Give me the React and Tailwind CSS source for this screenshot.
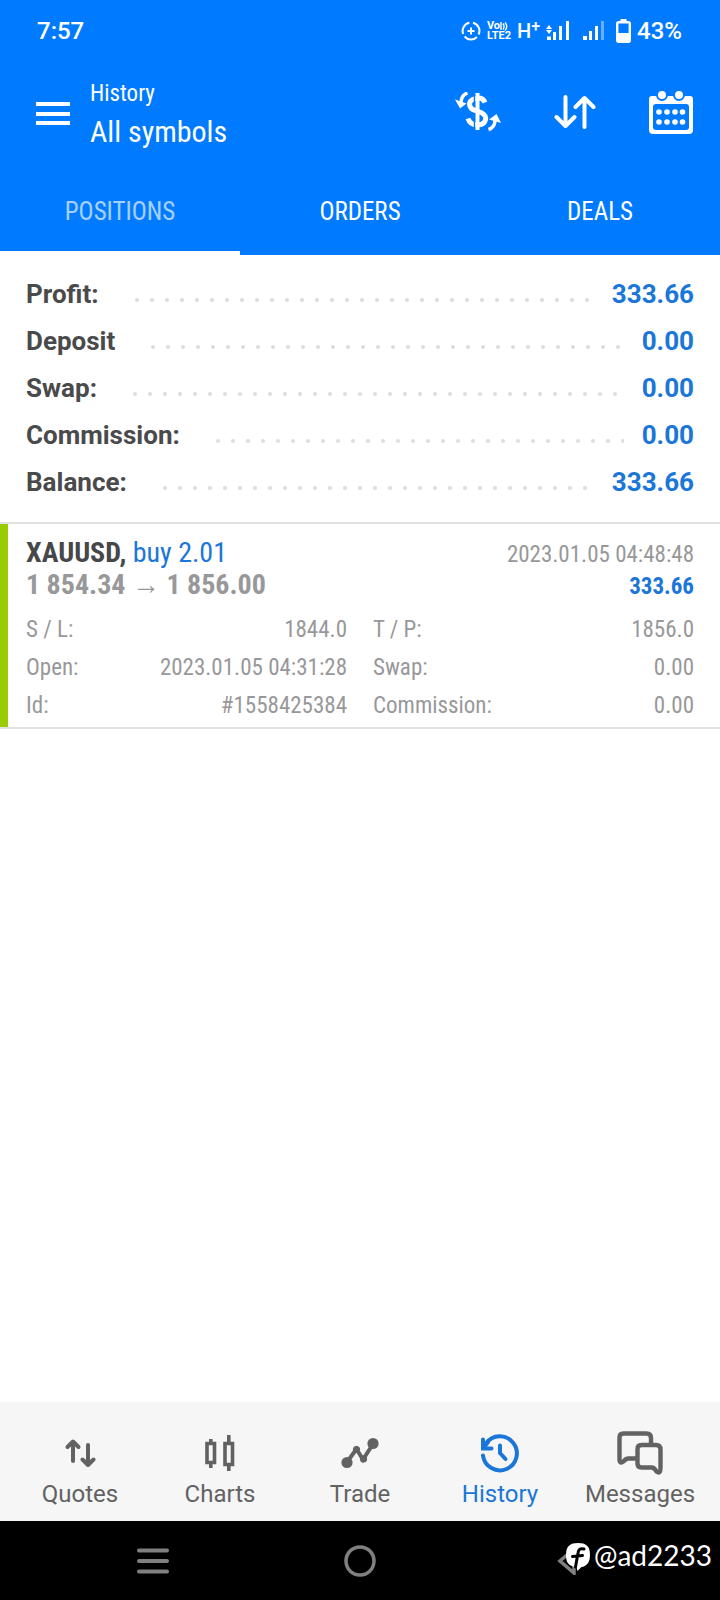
const condensed = "font-['Roboto_Condensed','Liberation_Sans_Narrow',Roboto,sans-serif]";

const summary = [
  { label: "Profit:", value: "333.66" },
  { label: "Deposit", value: "0.00" },
  { label: "Swap:", value: "0.00" },
  { label: "Commission:", value: "0.00" },
  { label: "Balance:", value: "333.66" },
];

const details = [
  { label: "S / L:", value: "1844.0" },
  { label: "T / P:", value: "1856.0" },
  { label: "Open:", value: "2023.01.05 04:31:28" },
  { label: "Swap:", value: "0.00" },
  { label: "Id:", value: "#1558425384" },
  { label: "Commission:", value: "0.00" },
];

function DataSaverIcon() {
  return (
    <svg width="20" height="20" viewBox="0 0 20 20" fill="none" stroke="currentColor" strokeWidth="2">
      <path d="M12 1.7A8.4 8.4 0 0 1 17.6 13.5M16 16A8.4 8.4 0 0 1 3.6 15.5M2.2 13A8.4 8.4 0 0 1 8.4 1.7" />
      <path d="M10 6.5v7M6.5 10h7" />
    </svg>
  );
}

function SignalIcon({ data }) {
  return (
    <svg width="24" height="20" viewBox="0 0 24 20" fill="currentColor">
      {data ? (
        <>
          <path d="M3 4l3 4H0zM3 13l3-4H0z" />
          <path d="M1 15.5h4V19H1zM7 11h3v8H7zM13 5h3v14h-3z" />
          <path d="M20 0h3v19h-3z" />
        </>
      ) : (
        <>
          <path d="M1 15h4v4H1zM7 10h3v9H7zM13 5h3v14h-3z" />
          <path d="M19 0h3v19h-3z" opacity="0.4" />
        </>
      )}
    </svg>
  );
}

function BatteryIcon() {
  return (
    <svg width="15" height="24" viewBox="0 0 15 24" fill="none">
      <path d="M4.5 0h6v3h-6z" fill="currentColor" />
      <rect x="1.2" y="3.2" width="12.6" height="19.6" rx="1.5" stroke="currentColor" strokeWidth="2.4" />
      <path d="M2 14h11v8H2z" fill="currentColor" />
    </svg>
  );
}

function StatusBar() {
  return (
    <div className="flex h-[62px] items-center justify-between pr-[38px] pl-[37px] text-2xl font-medium">
      <span>7:57</span>
      <div className="flex items-center">
        <DataSaverIcon />
        <span className="ml-1.5 flex flex-col text-[11px] leading-[10px] font-bold">
          <span className="flex items-center">
            Vo
            <svg width="8" height="9" viewBox="0 0 8 9" fill="none" stroke="currentColor" strokeWidth="1.4">
              <path d="M1 0v8M3 1.5q2 3 0 6M5 .5q3.5 4 0 8" />
            </svg>
          </span>
          <span>LTE2</span>
        </span>
        <span className="ml-1.5 text-xl leading-5">H</span>
        <span className="mb-2 text-base leading-4">+</span>
        <span className="ml-1.5"><SignalIcon data /></span>
        <span className="ml-3"><SignalIcon /></span>
        <span className="ml-2.5"><BatteryIcon /></span>
        <span className="ml-1.5">43%</span>
      </div>
    </div>
  );
}

function MenuIcon() {
  return (
    <svg width="34" height="24" viewBox="0 0 34 24" fill="currentColor">
      <path d="M0 0h34v4H0zM0 10h34v4H0zM0 19h34v4H0z" />
    </svg>
  );
}

function CurrencyIcon() {
  return (
    <svg width="46" height="40" viewBox="0 0 46 40" fill="none" stroke="currentColor">
      <path
        d="M30 10.5C28 5.5 23 5.5 20 6.5C12 9 13.5 16 20 18.5L26 20.5C34 24 31 33 22.5 33C17.5 33 14.5 31 13 26.5"
        strokeWidth="5"
      />
      {/* thin gap between the S curve and its vertical bar */}
      <path d="M19.5 3v12M19.5 26v10" stroke="#007aff" strokeWidth="1.5" />
      <path d="M22.5 1v37" strokeWidth="4" />
      <path d="M12.5 1C7.5 2.5 6 5.5 6 11" strokeWidth="3.4" />
      <path d="M0 7.5l11.5 4L5 16.5z" fill="currentColor" stroke="none" />
      <path d="M33.5 37.5C38.5 36 40 33 40 28" strokeWidth="3.4" />
      <path d="M46 31L34 27.5L41.5 22z" fill="currentColor" stroke="none" />
    </svg>
  );
}

function SortIcon() {
  return (
    <svg
      width="42"
      height="36"
      viewBox="0 0 42 36"
      fill="none"
      stroke="currentColor"
      strokeWidth="4"
      strokeLinecap="round"
      strokeLinejoin="round"
    >
      <path d="M11.5 3v29M2.5 23l9 9l9-9" />
      <path d="M30.5 33V4M21.5 13l9-9l9 9" />
    </svg>
  );
}

function CalendarIcon() {
  return (
    <svg width="44" height="44" viewBox="0 0 44 44" fill="none">
      <path
        fillRule="evenodd"
        fill="currentColor"
        d="M3 6h38a3 3 0 0 1 3 3v31a4 4 0 0 1-4 4H4a4 4 0 0 1-4-4V9a3 3 0 0 1 3-3zM7 14a3 3 0 0 0-3 3v20a3 3 0 0 0 3 3h30a3 3 0 0 0 3-3V17a3 3 0 0 0-3-3z"
      />
      {[13, 30].map((x) => (
        <circle key={x} cx={x} cy="5" r="5" fill="currentColor" stroke="#007aff" strokeWidth="2" />
      ))}
      {[10, 18, 26, 33.5].map((x) => (
        <g key={x} fill="currentColor">
          <circle cx={x} cy="22" r="2.8" />
          <circle cx={x} cy="32" r="2.8" />
        </g>
      ))}
    </svg>
  );
}

function Header() {
  return (
    <header className={`flex h-[104px] items-center pr-[27px] pl-9 ${condensed}`}>
      <button aria-label="Menu"><MenuIcon /></button>
      <div className="ml-5 grow">
        <p className="text-[23px] leading-9">History</p>
        <h1 className="text-3xl leading-10">All symbols</h1>
      </div>
      <div className="mb-1 flex items-center gap-[53px]">
        <button aria-label="Currency"><CurrencyIcon /></button>
        <button aria-label="Sort"><SortIcon /></button>
        <button aria-label="Choose period"><CalendarIcon /></button>
      </div>
    </header>
  );
}

function Tabs() {
  return (
    <nav className={`flex h-[89px] text-[25px] ${condensed}`}>
      <button className="flex-1 border-b-4 border-white pt-1.5 text-white/65">POSITIONS</button>
      <button className="flex-1 border-b-4 border-transparent pt-1.5">ORDERS</button>
      <button className="flex-1 border-b-4 border-transparent pt-1.5">DEALS</button>
    </nav>
  );
}

function Summary() {
  return (
    <dl className="px-[26px] py-4 text-[26px] font-bold">
      {summary.map(({ label, value }) => (
        <div key={label} className="flex h-[47px] items-center">
          <dt className="text-[#4a4a4c]">{label}</dt>
          <span className="mt-2.5 mr-[18px] ml-9 h-1 grow bg-[radial-gradient(circle_at_2px_2px,#dedede_1.5px,transparent_2.5px)] bg-[length:15px_4px] bg-repeat-x" />
          <dd className="text-[#1a76d8]">{value}</dd>
        </div>
      ))}
    </dl>
  );
}

function Position() {
  return (
    <section className={`border-y-2 border-[#e2e2e2] text-[23px] text-[#98989a] ${condensed}`}>
      <div className="border-l-8 border-[#99cc00] pt-[13px] pr-[26px] pb-0.5 pl-[18px]">
        <div className="flex h-8 items-baseline justify-between">
          <h2 className="text-[28px] leading-8 font-bold text-[#47474a]">
            XAUUSD, <span className="font-normal text-[#1a76d8]">buy 2.01</span>
          </h2>
          <span>2023.01.05 04:48:48</span>
        </div>
        <div className="flex h-8 items-baseline justify-between font-bold">
          <span className="text-[28px] leading-8">1 854.34 → 1 856.00</span>
          <span className="text-[#1a76d8]">333.66</span>
        </div>
        <dl className="mt-2.5 grid grid-cols-2 gap-x-[26px]">
          {details.map(({ label, value }) => (
            <div key={label} className="flex h-[38px] items-center justify-between">
              <dt>{label}</dt>
              <dd>{value}</dd>
            </div>
          ))}
        </dl>
      </div>
    </section>
  );
}

function QuotesIcon() {
  return (
    <svg
      width="32"
      height="44"
      viewBox="0 0 32 44"
      fill="none"
      stroke="currentColor"
      strokeWidth="4"
      strokeLinecap="round"
      strokeLinejoin="round"
    >
      <path d="M9 30V11M3.5 16L9 10.5L14.5 16" />
      <path d="M24 14v19M18.5 28.5L24 34l5.5-5.5" />
    </svg>
  );
}

function ChartsIcon() {
  return (
    <svg width="30" height="44" viewBox="0 0 30 44" fill="none" stroke="currentColor" strokeWidth="3.6">
      <path d="M2 12.5h7.5v19H2zM20 12.5h7.5v21H20z" />
      <path d="M5.8 8v4M5.8 32v5M23.8 4v8M23.8 34v6" />
    </svg>
  );
}

function TradeIcon() {
  return (
    <svg width="38" height="44" viewBox="0 0 38 44" fill="currentColor">
      <path d="M6 31L15.5 18L22 28.5L32 13" fill="none" stroke="currentColor" strokeWidth="4" />
      <circle cx="6" cy="31.5" r="5.6" />
      <circle cx="15.5" cy="18.5" r="3.6" />
      <circle cx="22.5" cy="28" r="3.6" />
      <circle cx="32" cy="12.5" r="5.6" />
    </svg>
  );
}

function HistoryIcon() {
  return (
    <svg width="40" height="44" viewBox="0 0 40 44" fill="none" stroke="currentColor" strokeWidth="4" strokeLinecap="round">
      <path d="M3 24.5A17 17 0 1 0 6 12.5" />
      <path d="M3 8.5V17.5H11.5" />
      <path d="M3.5 17L8 11" />
      <path d="M20 14.5V22l5.5 6" />
    </svg>
  );
}

function MessagesIcon() {
  return (
    <svg width="46" height="44" viewBox="0 0 46 44" fill="none" stroke="currentColor" strokeWidth="4.4" strokeLinejoin="round">
      <path d="M19 27.5H11.5Q9 27.5 7 30Q2.5 33.5 2.5 28.5V6.5Q2.5 2.5 6.5 2.5H29.5Q34 2.5 34 7V13" />
      <path d="M24.5 14H39Q43.5 14 43.5 18.5V37Q43.5 43.5 39.5 40.5Q37.5 36.5 34.5 36.5H24.5Q20.5 36.5 20.5 32.5V18Q20.5 14 24.5 14Z" />
    </svg>
  );
}

const navItems = [
  { label: "Quotes", Icon: QuotesIcon },
  { label: "Charts", Icon: ChartsIcon },
  { label: "Trade", Icon: TradeIcon },
  { label: "History", Icon: HistoryIcon, active: true },
  { label: "Messages", Icon: MessagesIcon },
];

function BottomNav() {
  return (
    <nav className="flex h-[119px] bg-[#f6f6f6] px-2.5 pt-[29px]">
      {navItems.map(({ label, Icon, active }) => (
        <a
          key={label}
          href="#"
          className={`flex flex-1 flex-col items-center gap-[3px] text-2xl ${active ? "text-[#1a76d8]" : "text-[#626262]"}`}
        >
          <Icon />
          {label}
        </a>
      ))}
    </nav>
  );
}

function SystemNav() {
  return (
    <div className="relative flex h-[79px] items-center bg-black px-[50px] text-[#808080]">
      <button aria-label="Recent apps" className="flex flex-1 justify-center">
        <svg width="32" height="26" viewBox="0 0 32 26" stroke="currentColor" strokeWidth="4" strokeLinecap="round">
          <path d="M2 2.5h28M2 13h28M2 23.5h28" />
        </svg>
      </button>
      <button aria-label="Home" className="flex flex-1 justify-center">
        <svg width="32" height="32" viewBox="0 0 32 32" fill="none" stroke="currentColor" strokeWidth="3.5">
          <circle cx="16" cy="16" r="14" />
        </svg>
      </button>
      <button aria-label="Back" className="flex flex-1 justify-center">
        <svg width="20" height="28" viewBox="0 0 20 28" fill="none" stroke="currentColor" strokeWidth="3.5">
          <path d="M17 2L3 14l14 12z" />
        </svg>
      </button>
      <div className="absolute top-4 right-2 flex items-center gap-1 font-[Lato,sans-serif] text-[28px] leading-9 text-white">
        <svg width="24" height="28" viewBox="0 0 24 28">
          <path d="M12 0C20 0 24 3 24 12C24 20 20 23.5 15.5 24L11.5 28L10.5 24C3 23.5 0 20 0 12C0 3 4 0 12 0Z" fill="#fff" />
          <path
            d="M18 6Q12.5 4.5 12 10L9.5 24M6.500 13.5L16.5 12.5"
            fill="none"
            stroke="#000"
            strokeWidth="3"
            strokeLinecap="round"
          />
        </svg>
        <span className="pb-1">@ad2233</span>
      </div>
    </div>
  );
}

export default function App() {
  return (
    <div className="flex min-h-screen flex-col bg-white font-[Roboto,sans-serif]">
      <div className="bg-[#007aff] text-white">
        <StatusBar />
        <Header />
        <Tabs />
      </div>
      <main className="grow">
        <Summary />
        <Position />
      </main>
      <BottomNav />
      <SystemNav />
    </div>
  );
}
